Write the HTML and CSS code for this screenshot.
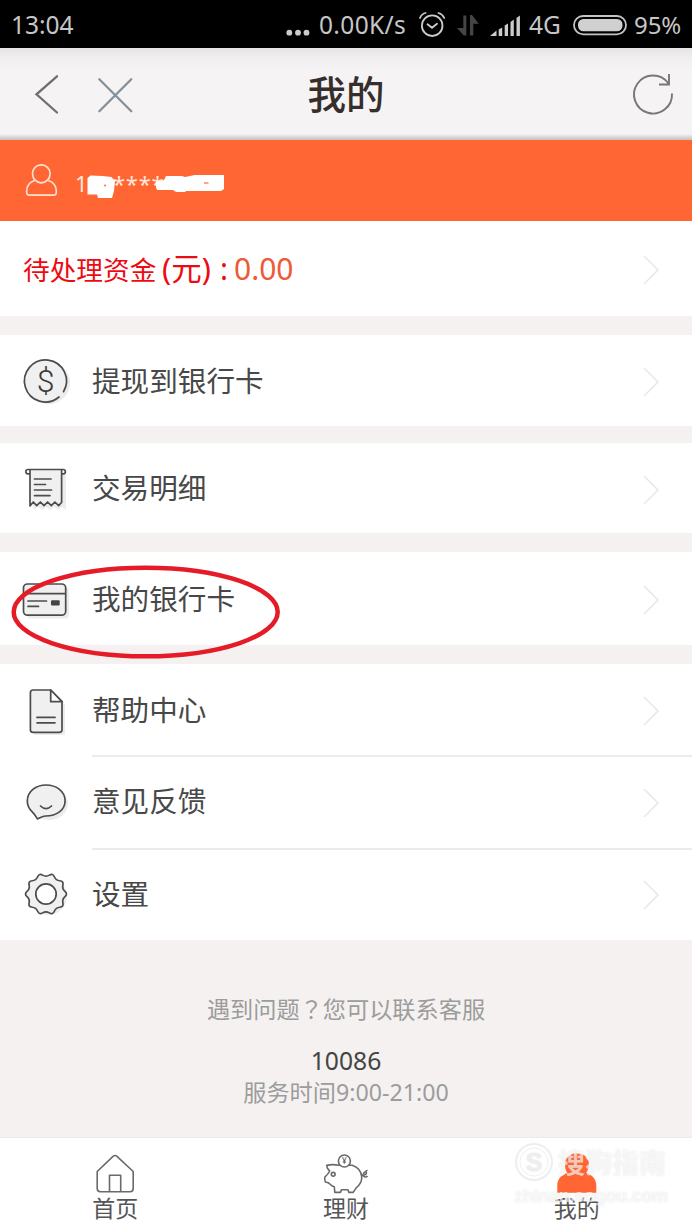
FILE: index.html
```html
<!DOCTYPE html>
<html lang="zh-CN">
<head>
<meta charset="utf-8">
<title>我的</title>
<link rel="stylesheet" href="styles.css">
</head>
<body>
<div class="screen">
  <div class="status">
    <span class="clock">13:04</span>
    <svg class="status-dots" width="26" height="48" viewBox="285 0 26 48"><g fill="#ccc"><circle cx="289.3" cy="31.7" r="2.9"/><circle cx="298" cy="31.7" r="2.9"/><circle cx="306.5" cy="31.7" r="2.9"/></g></svg>
    <span class="speed">0.00K/s</span>
    <svg width="110" height="48" viewBox="415 0 110 48">
      <g fill="none" stroke="#ccc" stroke-width="1.8" stroke-linecap="round">
        <circle cx="432.2" cy="24.7" r="10.3"/>
        <path d="M427.5 23.3l4.5 3.5 5-4M420 17q1.5-4 5.500-5M438.500 12q4 1 5.700 5"/>
      </g>
      <path fill="#454545" d="M463.300 14.500h3v20h-2.500l-6.800-7.500h6.300zM470 14h2l6.800 8.700h-5.500v11.800H470z"/>
      <path fill="#ccc" d="M490 35l6.500-5.500V35zM498.700 28.500l3.500-2V35h-3.500zM504.700 24.500l3.300-2V35h-3.300zM510.500 21l3.300-2.500V35h-3.300zM516.500 17l3.400-2.500V35h-3.400z"/>
    </svg>
    <span class="network">4G</span>
    <svg width="60" height="48" viewBox="570 0 60 48"><rect x="573" y="15" width="52" height="18.300" rx="9.100" fill="none" stroke="#c4c4c4" stroke-width="1.800"/><rect x="577" y="18" width="44.500" height="12.300" rx="5.500" fill="#d0d0d0"/></svg>
    <span class="battery">95%</span>
  </div>

  <header class="header">
    <svg width="150" height="60" viewBox="0 64 150 60" fill="none" stroke-width="2.300" stroke-linecap="round"><path stroke="#6f6f6f" d="M57 76.300L36.500 94.300 57 112.500"/><path stroke="#84919b" d="M99.300 79.300l32 32M131.300 79.300l-32 32"/></svg>
    <h1 class="title">我的</h1>
    <svg width="150" height="60" viewBox="542 64 150 60" fill="none" stroke="#777" stroke-width="1.900"><path d="M672 93.500A19 19 0 1 1 668.300 83.200M669 74v10.500h-10"/></svg>
  </header>

  <div class="account">
    <svg width="60" height="60" viewBox="10 150 60 60" fill="none" stroke="#ffe0d0" stroke-width="1.700"><ellipse cx="41.300" cy="172.800" rx="8.800" ry="9"/><path d="M34.500 179.500C29 181.500 26.700 185 26.700 190v1.500q0 2.700 3 2.700h23.600q3 0 3-2.700V190c0-5-2.500-8.500-8-10.500"/></svg>
    <span class="phone">1</span>
    <svg class="mask-a" width="30" height="30" viewBox="86 170 30 30"><path fill="#fff" d="M87.500 178l3-2.500 12 .5 9 1 3.500 4-1 10-2 7H98l-1-3.500h-9.500v-13z"/><circle cx="105" cy="185.500" r="1" fill="#ff6633"/></svg>
    <span class="stars">****</span>
    <svg class="mask-b" width="70" height="30" viewBox="155 170 70 30"><path fill="#fff" d="M156 182l8-2 2-4h16l3 1 10-2h29v14l-3 2h-35l-1 1h-9l-3-2h-16l-1-3z"/><path stroke="#ff6633" stroke-width="1.200" d="M204 183h4.500"/></svg>
  </div>

  <main>
    <section class="group funds">
      <div class="row">
        <p class="amount"><span class="amount-label">待处理资金</span><span class="unit">(元)</span><span class="colon">:</span><span class="value">0.00</span></p>
        <svg class="chev" viewBox="0 0 20 32"><path d="M4 2l14 14L4 30"/></svg>
      </div>
    </section>
    <section class="group withdraw">
      <div class="row">
        <svg class="icon" viewBox="20 355 52 52"><circle class="shade" cx="49" cy="383" r="21"/><circle class="fill" cx="46" cy="380.300" r="21"/><path class="line" d="M63.500 391.700A21 21 0 1 0 59 397"/><text class="dollar" x="45.500" y="391.500" text-anchor="middle">$</text></svg>
        <span class="label">提现到银行卡</span>
        <svg class="chev" viewBox="0 0 20 32"><path d="M4 2l14 14L4 30"/></svg>
      </div>
    </section>
    <section class="group history">
      <div class="row">
        <svg class="icon" viewBox="20 462 52 52"><path class="shade" d="M33 473h33v37l-4-3-4 3-4-3-4 3-4-3-4 3-4-3-5 3z"/><path class="fill" d="M30 470h32v35l-3.500-3-3.500 3-3.500-3-3.500 3-3.500-3-3.500 3-3.500-3-3.500 3-4-2z"/><path class="line" d="M30 470v36l3.300-4 3.400 3.700 3.700-3.700 3.600 3.700 3.600-3.700 3.700 3.700 3.600-3.700 3.700 3.700 3-3.200V470M29.500 473.800H28a2.100 2.100 0 0 1 0-4.300h35.200a2.100 2.100 0 0 1 0 4.300h-1.500"/><path class="line" d="M34.500 479H51M34.500 484.500h11M34.500 490h17M34.500 495.600H50"/></svg>
        <span class="label">交易明细</span>
        <svg class="chev" viewBox="0 0 20 32"><path d="M4 2l14 14L4 30"/></svg>
      </div>
    </section>
    <section class="group cards">
      <div class="row">
        <svg class="icon" viewBox="20 572 52 52"><rect class="shade" x="27" y="586" width="42" height="31.500" rx="4"/><rect class="fill line" x="23.500" y="583" width="42.200" height="31.200" rx="4"/><path class="line" d="M24 592.700h41M28 600h18.500M28 605.400h10.500"/><rect x="51" y="599.200" width="8.700" height="5.200" rx="1" fill="#444"/></svg>
        <span class="label">我的银行卡</span>
        <svg class="chev" viewBox="0 0 20 32"><path d="M4 2l14 14L4 30"/></svg>
      </div>
      <svg class="ring" width="272" height="98" viewBox="0 0 272 98"><ellipse cx="135.700" cy="49" rx="132" ry="44.300" fill="none" stroke="#e51c28" stroke-width="4.500"/></svg>
    </section>
    <section class="group support">
      <div class="row">
        <svg class="icon" viewBox="20 683 52 52"><path class="shade" d="M34 692h20l11 11v31H34z"/><path class="fill line" d="M33 689h17.700L62 700.700v28q0 2.600-2.600 2.600H33q-2.600 0-2.600-2.600v-37Q30.400 689 33 689z"/><path class="line" fill="#fff" d="M50.700 689v11.700H62zM37 716.400h18M37 721.800h18"/></svg>
        <span class="label">帮助中心</span>
        <svg class="chev" viewBox="0 0 20 32"><path d="M4 2l14 14L4 30"/></svg>
      </div>
      <div class="row ruled">
        <svg class="icon" viewBox="20 775 52 52"><ellipse class="shade" cx="49" cy="804" rx="19" ry="16"/><path class="fill line" d="M37.500 819C35.500 816.500 35 814 32.500 812.200 29 809 27.300 805.500 27.300 801c0-9.500 8.500-16 18.800-16s19 6.500 19 15.700c0 9.500-8.500 15.300-19.500 15.300-3 0-5 1.500-8.100 3z"/><path class="line" d="M40.500 806q5.500 5.200 11 0"/></svg>
        <span class="label">意见反馈</span>
        <svg class="chev" viewBox="0 0 20 32"><path d="M4 2l14 14L4 30"/></svg>
      </div>
      <div class="row ruled">
        <svg class="icon" viewBox="-26 -26 52 52"><circle class="shade" cx="2" cy="2" r="19"/><path class="fill line" d="M18.990-2.600Q22 0 18.990 2.600Q15.980 5.190 16.890 9.060Q17.800 12.930 13.840 13.260Q9.870 13.590 8.340 17.260Q6.800 20.920 3.400 18.860Q0 16.800-3.400 18.860Q-6.800 20.920-8.340 17.260Q-9.870 13.590-13.840 13.260Q-17.800 12.930-16.890 9.060Q-15.980 5.190-18.990 2.600Q-22 0-18.990-2.600Q-15.980-5.190-16.890-9.060Q-17.800-12.930-13.840-13.260Q-9.870-13.590-8.340-17.260Q-6.800-20.920-3.400-18.860Q0-16.800 3.400-18.860Q6.800-20.920 8.340-17.260Q9.870-13.590 13.840-13.260Q17.800-12.930 16.890-9.060Q15.980-5.190 18.990-2.600z"/><circle class="line" r="10.200" fill="#fff"/></svg>
        <span class="label">设置</span>
        <svg class="chev" viewBox="0 0 20 32"><path d="M4 2l14 14L4 30"/></svg>
      </div>
    </section>
  </main>

  <footer class="contact">
    <p class="hint">遇到问题<span lang="zh-TW" class="mark-q">？</span>您可以联系客服</p>
    <p class="tel">10086</p>
    <p class="hours">服务时间9:00-21:00</p>
  </footer>

  <nav class="tabs">
    <div class="tab">
      <svg class="tab-icon" viewBox="91.300 1150 48 46"><path d="M97.500 1171.500l15.800-15.200q2-1.600 4 0l16.200 15.200v17q0 3.200-3 3.200h-30q-3 0-3-3.200zM109.800 1191.500v-16.300H121v16.300"/></svg>
      <span>首页</span>
    </div>
    <div class="tab">
      <svg class="tab-icon" viewBox="322 1150 48 46"><path d="M338.500 1165.200q-6-1.200-11.800.2.300 3.600 3 5.600-1.500 3.200-4.700 5.800-.9 2.700.3 5.200c3 .2 4 1 5.200 2.500 1.200 1.400 2.300 2 3.800 2.200l.5 5.700h5.600l1.200-2.700h6.300l1 2.700h4.300l3-4.500c4-3.300 5.800-7.200 5.500-11-.4-6-4-9.700-9.500-11.600h-13.700M361.500 1175c3.500 1 6-1.700 4.500-3-1.700-.8-3.500 2.500-2.500 4s3 1.300 4 0M365.500 1172q.5-1.600 2-1.800"/><circle cx="333.200" cy="1174.300" r="1.900"/><circle cx="344.400" cy="1161" r="6" fill="#fff"/><text class="yen" x="344.400" y="1164" text-anchor="middle">¥</text></svg>
      <span>理财</span>
    </div>
    <div class="tab">
      <svg class="tab-icon" viewBox="553.700 1150 48 46"><path class="person" d="M577.700 1153.300c7 0 12 4.700 12 11.200 0 3.500-1.500 6.500-2.700 8.500 6.500 2 10 6.500 10 12.500v7.200h-39v-7.200c0-6 3.500-10.500 10-12.500-1.500-2-2.300-5-2.300-8.500 0-6.500 5-11.200 12-11.200z"/></svg>
      <span>我的</span>
    </div>
    <div class="mark">
      <div class="mark-top"><svg width="40" height="40" viewBox="0 0 40 40"><circle cx="20" cy="20" r="18" fill="none" stroke="#eee" stroke-width="2"/><circle cx="20" cy="20" r="14" fill="none" stroke="#f0f0f0"/><text class="mark-s" x="20" y="29" text-anchor="middle">S</text></svg><span>搜狗指南</span></div>
      <div class="mark-url">zhinan.sogou.com</div>
    </div>
  </nav>
</div>
</body>
</html>
```
FILE: styles.css
```css
* { box-sizing: border-box; }
body, h1, p { margin: 0; }
body { background: #f4f1f0; }
svg { display: block; flex: none; }
.screen {
  width: 692px; height: 1230px; overflow: hidden;
  display: flex; flex-direction: column;
  font-family: "Noto Sans", "Noto Sans CJK SC", sans-serif;
  color: #484848; background: #f4f1f0;
}
.status {
  height: 48px; flex: none; background: #000; color: #c6c6c6;
  display: grid; align-items: center;
  grid-template-columns: 274px 34px 96px 114px 42px 62px 1fr;
  padding-left: 11px; font-size: 24.5px; line-height: 50px; white-space: nowrap;
}
.speed { letter-spacing: .35px; }
.battery { font-size: 24px; letter-spacing: -.1px; padding-left: 1px; }
.header {
  height: 92px; flex: none; display: flex; align-items: center; justify-content: space-between;
  background: linear-gradient(#e6e4e5 0, #f0eeef 10px, #f5f3f4 24px, #f5f3f4 86px, #d0d0ce 90px, #c8c4c0 92px);
}
.title { font-size: 38.500px; line-height: 56px; padding-bottom: 5px; font-weight: 500; font-family: "Noto Sans CJK SC", sans-serif; color: #352e2c; }
.account {
  height: 81px; flex: none; background: #ff6633; display: flex; align-items: center;
  padding-left: 10px; color: #ffe8de; font-size: 22px;
}
.phone { margin-left: 5px; width: 11px; padding-top: 5px; }
.mask-a { position: relative; z-index: 1; margin-top: 9px; }
.stars { margin-left: -3px; width: 42px; padding-top: 5px; white-space: nowrap; letter-spacing: .7px; }
.mask-b { margin-top: 9px; position: relative; z-index: 1; }
.group { background: #fff; position: relative; display: flex; flex-direction: column; }
.row { flex: 1; display: flex; align-items: center; padding: 0 32px 0 20px; position: relative; }
.funds { height: 95px; margin-bottom: 19px; }
.withdraw { height: 91px; margin-bottom: 17px; }
.history { height: 90px; margin-bottom: 19px; }
.cards { height: 93px; margin-bottom: 19px; }
.support { height: 276px; }
.ruled { background: linear-gradient(#ebebeb, #ebebeb) 92px 0 / 600px 2px no-repeat; }
.support .row:first-child { flex: 0 0 91px; }
.icon { width: 52px; height: 52px; }
.label { margin-left: 20px; padding-bottom: 2px; font: 28.600px/42px "Noto Sans CJK SC", sans-serif; }
.chev { width: 20px; height: 32px; margin: 3px 0 0 auto; fill: none; stroke: #e8e8e8; stroke-width: 1.600; }
.shade { fill: #ececec; }
.fill { fill: #f0f0f0; }
.line { stroke: #4c4c4c; stroke-width: 1.700; stroke-linejoin: round; stroke-linecap: round; }
.line:not(.fill):not([fill]) { fill: none; }
.dollar { font: 300 32px Roboto, sans-serif; fill: #3c3c3c; }
.amount { display: flex; align-items: baseline; padding-left: 3px; padding-top: 1px; color: #ed0b12; line-height: 44px; font-size: 30px; white-space: nowrap; }
.amount-label { font-size: 26.700px; width: 139px; }
.unit { width: 58px; font-size: 30.500px; }
.colon { width: 14px; }
.value { color: #ee5a36; }
.contact { height: 197px; flex: none; text-align: center; padding-top: 50px; color: #9c9c9c; font-size: 23.200px; line-height: 38px; }
.hint { font-family: "Noto Sans CJK SC", sans-serif; height: 52px; line-height: 36px; }
.mark-q { font-family: "Noto Sans CJK TC", sans-serif; }
.tel { color: #444; font-size: 24.700px; line-height: 38px; height: 32px; }
.hours { line-height: 36px; }
.tabs { height: 93px; flex: none; background: #fff; display: grid; grid-template-columns: repeat(3, 1fr); position: relative; border-top: 1px solid #ebe9e9; }
.tab { display: flex; flex-direction: column; align-items: center; padding-top: 12px; font: 23px/22px "Noto Sans CJK SC", sans-serif; color: #555; }
.tab-icon { width: 48px; height: 46px; fill: none; stroke: #6a6a6a; stroke-width: 1.600; stroke-linejoin: round; }
.tab-icon .person { fill: #ff6633; stroke: none; }
.yen { font: 8px "Noto Sans", sans-serif; fill: #555; stroke: none; }
.mark { position: absolute; left: 514px; top: 4px; width: 170px; color: rgba(255,255,255,.65); text-shadow: 0 0 2px rgba(130,130,130,.22); }
.mark-top { display: flex; align-items: center; gap: 4px; font: bold 27px/40px "Noto Sans CJK SC", sans-serif; }
.mark-url { font: bold 18px/22px "Liberation Sans", sans-serif; margin-top: 3px; letter-spacing: -.25px; }
.mark-s { font: bold 25px "Liberation Sans", sans-serif; fill: #eee; }
.ring { position: absolute; left: 10px; top: 11px; z-index: 2; }
```
